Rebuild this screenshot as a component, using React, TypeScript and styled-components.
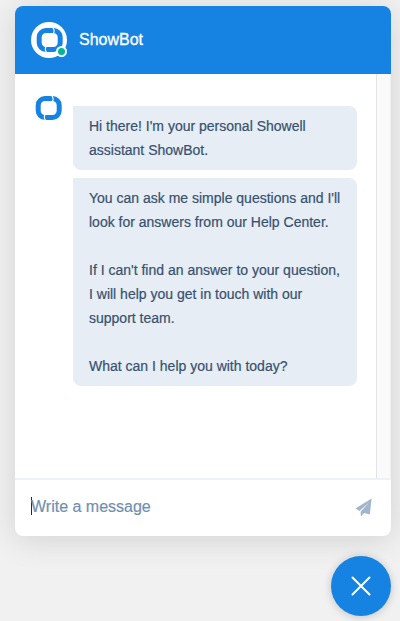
import React from 'react';
import styled, { createGlobalStyle } from 'styled-components';

const GlobalStyle = createGlobalStyle`
  * { box-sizing: border-box; }
  html, body { margin: 0; height: 100%; }
  body {
    background: #f1f1f1;
    font-family: "Liberation Sans", Arial, sans-serif;
    overflow: hidden;
  }
`;

const Page = styled.main`
  display: flex;
  flex-direction: column;
  height: 621px;
  padding: 6px 9px 5px 15px;
`;

const ChatWindow = styled.section`
  display: flex;
  flex-direction: column;
  height: 530px;
  border-radius: 8px;
  overflow: hidden;
  background: #fff;
  box-shadow: 0 4px 32px rgba(0, 0, 0, 0.13);
`;

const Header = styled.header`
  display: flex;
  align-items: center;
  gap: 12px;
  height: 68px;
  padding-left: 16px;
  background: #1683e2;
`;

const Avatar = styled.div`
  position: relative;
  display: flex;
  align-items: center;
  justify-content: center;
  width: 36px;
  height: 36px;
  border-radius: 50%;
  background: #fff;
`;

const StatusDot = styled.span`
  position: absolute;
  right: 0;
  bottom: 1px;
  width: 11px;
  height: 11px;
  border: 2px solid #fff;
  border-radius: 50%;
  background: #04b597;
`;

const Title = styled.h1`
  margin: 0;
  color: #fff;
  font-size: 16px;
  font-weight: 400;
  line-height: 24px;
  -webkit-text-stroke: 0.3px #fff;
`;

const Body = styled.div`
  display: flex;
  flex: 1;
`;

const Conversation = styled.div`
  display: flex;
  flex: 1;
  gap: 11px;
  align-items: flex-start;
  padding: 22px 19px 0 20px;
`;

const ScrollTrack = styled.div`
  width: 15px;
  border-left: 1px solid #e3e3e3;
  border-right: 1px solid #f0f0f0;
  background: #fafafa;
`;

const Messages = styled.div`
  display: flex;
  flex: 1;
  flex-direction: column;
  gap: 8px;
  padding-top: 10px;
`;

const Bubble = styled.div`
  padding: 8px 0 8px 16px;
  border-radius: 0 8px 8px 8px;
  background: #e6edf5;
  color: #38516f;
  font-size: 14px;
  line-height: 24px;
  white-space: pre;
  -webkit-text-stroke: 0.2px #38516f;
`;

const Composer = styled.footer`
  display: flex;
  align-items: center;
  justify-content: space-between;
  height: 58px;
  padding: 0 19px 2px 16px;
  border-top: 2px solid #edf2f8;
`;

const Placeholder = styled.div`
  display: flex;
  align-items: center;
  color: #7090b2;
  font-size: 16px;
  line-height: 24px;
  -webkit-text-stroke: 0.2px #7090b2;
`;

const Caret = styled.span`
  width: 1px;
  height: 18px;
  margin: -3px -1px 0 0;
  background: #1c2b3a;
`;

const CloseButton = styled.button`
  display: flex;
  align-items: center;
  justify-content: center;
  align-self: flex-end;
  width: 60px;
  height: 60px;
  margin-top: 20px;
  padding: 0;
  border: 0;
  border-radius: 50%;
  background: #1683e2;
  box-shadow: 0 1px 8px rgba(0, 0, 0, 0.2);
`;

const messages = [
  "Hi there! I'm your personal Showell\nassistant ShowBot.",
  "You can ask me simple questions and I'll\nlook for answers from our Help Center.\n\nIf I can't find an answer to your question,\nI will help you get in touch with our\nsupport team.\n\nWhat can I help you with today?",
];

// Rounded ring split into two interlocking halves.
const BrandMark = () => (
  <svg width="27" height="24" viewBox="0 0 27 24" fill="none">
    <rect x="3.2" y="2.6" width="21" height="18.8" rx="6.7" stroke="#1683e2" strokeWidth="5" />
    <path d="M16.8 -0.3Q19.2 2.6 17.2 5.6M10.6 24.3Q8.2 21.4 10.2 18.4" stroke="#fff" strokeWidth="1.1" />
  </svg>
);

export default function App() {
  return (
    <>
      <GlobalStyle />
      <Page>
        <ChatWindow>
          <Header>
            <Avatar><BrandMark /><StatusDot /></Avatar>
            <Title>ShowBot</Title>
          </Header>
          <Body>
            <Conversation>
              <BrandMark />
              <Messages>{messages.map((m) => <Bubble key={m}>{m}</Bubble>)}</Messages>
            </Conversation>
            <ScrollTrack />
          </Body>
          <Composer>
            <Placeholder><Caret />Write a message</Placeholder>
            <svg width="17" height="20" viewBox="0 0 17 20" fill="#a3b5cd">
              <path d="M16.6 1.6L0.4 11.4L4.6 14L14 5.4L5.6 14.8L5.9 19.6L9.2 16L14.8 17.6Z" />
            </svg>
          </Composer>
        </ChatWindow>
        <CloseButton aria-label="Close chat">
          <svg width="20" height="20" viewBox="0 0 20 20" stroke="#fff" strokeWidth="2" strokeLinecap="round">
            <path d="M1.5 1.5L18.5 18.5M18.5 1.5L1.5 18.5" />
          </svg>
        </CloseButton>
      </Page>
    </>
  );
}
